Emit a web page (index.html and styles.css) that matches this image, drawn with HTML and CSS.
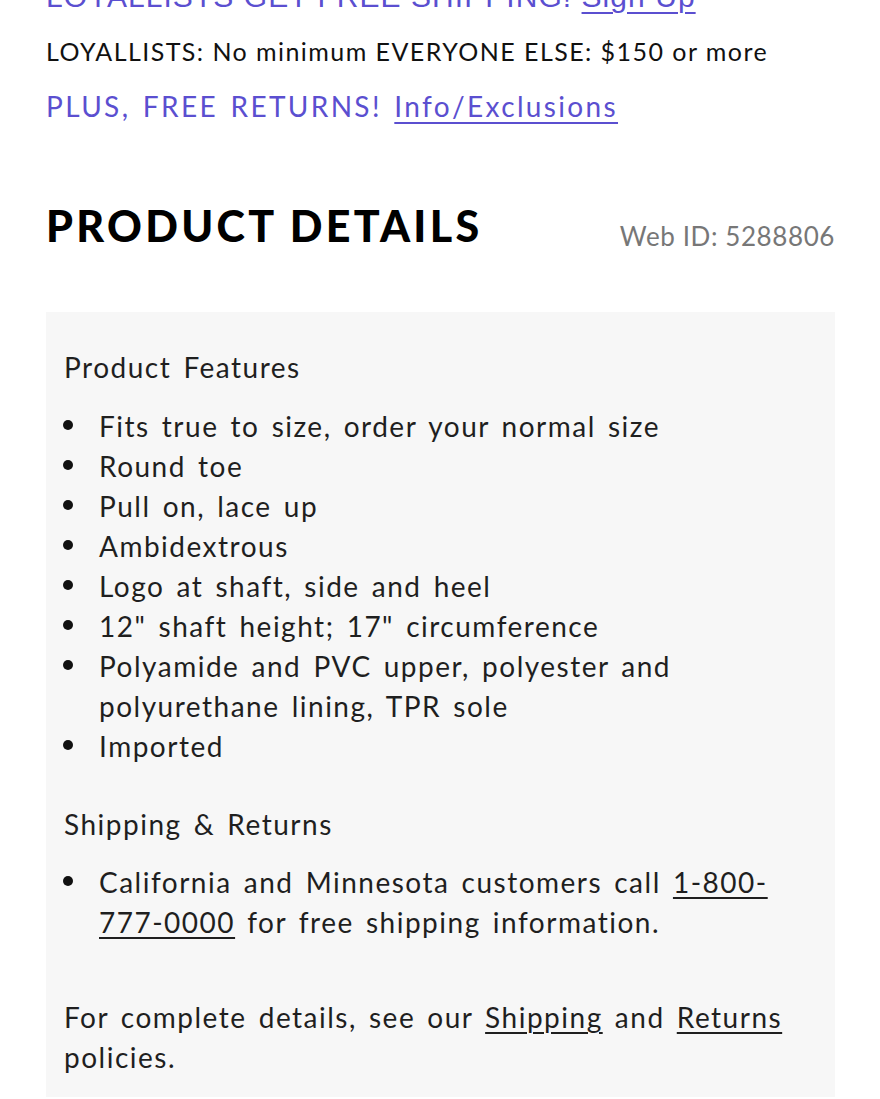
FILE: index.html
```html
<!DOCTYPE html>
<html>
<head>
<meta charset="utf-8">
<link rel="stylesheet" href="styles.css">
</head>
<body>
<div class="page">
  <div class="promo">
    <p class="promo-top">LOYALLISTS GET FREE SHIPPING! <a href="#">Sign Up</a></p>
    <p class="promo-min">LOYALLISTS: No minimum EVERYONE ELSE: $150 or more</p>
    <p class="promo-returns">PLUS, FREE RETURNS! <a href="#">Info/Exclusions</a></p>
  </div>
  <div class="details-head">
    <h2 class="details-title">PRODUCT DETAILS</h2>
    <span class="web-id">Web ID: 5288806</span>
  </div>
  <div class="details-box">
    <h3 class="box-title">Product Features</h3>
    <ul class="bullets">
      <li>Fits true to size, order your normal size</li>
      <li>Round toe</li>
      <li>Pull on, lace up</li>
      <li>Ambidextrous</li>
      <li>Logo at shaft, side and heel</li>
      <li>12" shaft height; 17" circumference</li>
      <li>Polyamide and PVC upper, polyester and polyurethane lining, TPR sole</li>
      <li>Imported</li>
    </ul>
    <h3 class="box-title second">Shipping &amp; Returns</h3>
    <ul class="bullets">
      <li>California and Minnesota customers call <a href="#">1-800-<wbr>777-0000</a> for free shipping information.</li>
    </ul>
    <p class="policies">For complete details, see our <a href="#">Shipping</a> and <a href="#">Returns</a> policies.</p>
  </div>
</div>
</body>
</html>
```
FILE: styles.css
```css
html, body {
  margin: 0;
  padding: 0;
  background: #fff;
}
body {
  font-family: Lato, "Liberation Sans", sans-serif;
  color: #1c1c1c;
  overflow: hidden;
}
.page {
  padding: 0 45px 0 46px;
}
.promo p {
  margin: 0;
}
.promo-top {
  font-family: "Liberation Sans", Arial, sans-serif;
  font-size: 30px;
  line-height: 34px;
  letter-spacing: 1.05px;
  margin-top: -20px !important;
  color: #5b4fd0;
}
.promo a {
  color: #5b4fd0;
  text-decoration: underline;
  text-decoration-thickness: 2px;
  text-underline-offset: 5px;
}
.promo-min {
  font-size: 25px;
  line-height: 30px;
  letter-spacing: 1.45px;
  margin-top: 22px !important;
  color: #111;
}
.promo-returns {
  font-size: 28px;
  line-height: 40px;
  letter-spacing: 2.35px;
  word-spacing: 3px;
  margin-top: 20px !important;
  color: #5b4fd0;
}
.details-head {
  display: flex;
  justify-content: space-between;
  align-items: flex-end;
  margin-top: 75px;
}
.details-title {
  margin: 0;
  font-size: 43px;
  line-height: 50px;
  font-weight: 900;
  color: #000;
  letter-spacing: 3.3px;
}
.web-id {
  font-size: 26px;
  line-height: 30px;
  letter-spacing: 0.6px;
  color: #777;
}
.details-box {
  margin-top: 61px;
  background: #f7f7f7;
  padding: 35px 18px 20px 18px;
  font-size: 28px;
  line-height: 40px;
  letter-spacing: 1.5px;
  word-spacing: 3.5px;
  color: #1f1f1f;
}
.box-title {
  margin: 0;
  font-size: 28px;
  line-height: 40px;
  font-weight: 400;
}
.box-title.second {
  margin-top: 38px;
}
.bullets {
  list-style: none;
  margin: 19px 0 0 0;
  padding: 0;
}
.box-title.second + .bullets {
  margin-top: 18px;
}
.bullets li {
  padding-left: 35px;
}
.bullets li::before {
  content: "";
  display: inline-block;
  width: 10px;
  height: 10px;
  border-radius: 50%;
  background: #111;
  margin-left: -36px;
  margin-right: 26px;
  vertical-align: 7px;
}
.details-box a {
  color: #1f1f1f;
  text-decoration: underline;
  text-decoration-thickness: 2px;
  text-underline-offset: 4px;
}
.policies {
  margin: 55px 0 0 0;
}
```
